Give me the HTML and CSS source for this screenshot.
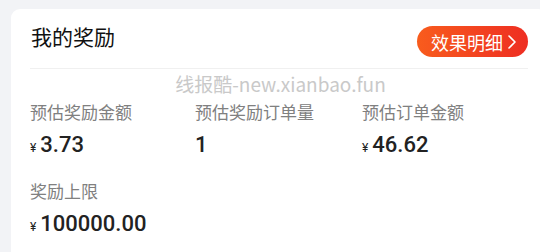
FILE: index.html
```html
<!DOCTYPE html>
<html lang="zh">
<head>
<meta charset="utf-8">
<link rel="stylesheet" href="styles.css">
</head>
<body>
<div class="card">
  <div class="header">
    <div class="title">我的奖励</div>
    <div class="btn">效果明细<svg class="chev" width="8" height="14" viewBox="0 0 8 14"><path d="M1 1 L7 7 L1 13" fill="none" stroke="#fff" stroke-width="1.6" stroke-linecap="round" stroke-linejoin="round"/></svg></div>
  </div>
  <div class="body">
    <div class="watermark">线报酷-new.xianbao.fun</div>
    <div class="grid">
      <div class="stat">
        <div class="label">预估奖励金额</div>
        <div class="value"><span class="yen">¥</span>3.73</div>
      </div>
      <div class="stat">
        <div class="label">预估奖励订单量</div>
        <div class="value">1</div>
      </div>
      <div class="stat">
        <div class="label">预估订单金额</div>
        <div class="value"><span class="yen">¥</span>46.62</div>
      </div>
      <div class="stat">
        <div class="label">奖励上限</div>
        <div class="value"><span class="yen">¥</span>100000.00</div>
      </div>
    </div>
  </div>
</div>
</body>
</html>
```
FILE: styles.css
```css
html, body {
  margin: 0;
  padding: 0;
}
body {
  background: #f2f3f6;
  width: 540px;
  height: 252px;
  overflow: hidden;
  font-family: "Noto Sans CJK SC", "Noto Sans", sans-serif;
}
.card {
  margin: 9px 0 0 11px;
  width: 536px;
  height: 243px;
  box-sizing: border-box;
  background: #fff;
  border-radius: 9px 9px 0 0;
  padding: 0 19px;
}
.header {
  display: flex;
  justify-content: space-between;
  align-items: flex-start;
  padding-top: 17px;
  padding-bottom: 11px;
  border-bottom: 1px solid #f0f0f0;
}
.title {
  font-size: 21px;
  line-height: 24px;
  color: #111;
  margin-left: 1px;
  margin-top: -2px;
}
.btn {
  width: 111px;
  height: 31px;
  box-sizing: border-box;
  border-radius: 16px;
  background: linear-gradient(to right, #f85c1d, #ee2e22);
  color: #fff;
  font-size: 18px;
  display: flex;
  align-items: center;
  justify-content: center;
  gap: 5px;
  padding-left: 2px;
}
.chev {
  display: block;
}
.body {
  position: relative;
  padding-top: 31px;
}
.watermark {
  position: absolute;
  left: 0;
  right: 0;
  top: 3px;
  text-align: center;
  font-size: 19px;
  line-height: 24px;
  color: #c9c9c9;
  padding-left: 3px;
}
.grid {
  display: grid;
  grid-template-columns: 165px 167px 166px;
  row-gap: 16px;
}
.label {
  font-size: 17px;
  line-height: 24px;
  color: #808080;
}
.value {
  margin-top: 6px;
  font-family: Roboto, "Noto Sans", sans-serif;
  font-weight: 500;
  font-size: 22px;
  line-height: 30px;
  color: #222;
}
.yen {
  font-size: 12px;
  font-weight: 400;
  margin-right: 4px;
  color: #222;
}
```
